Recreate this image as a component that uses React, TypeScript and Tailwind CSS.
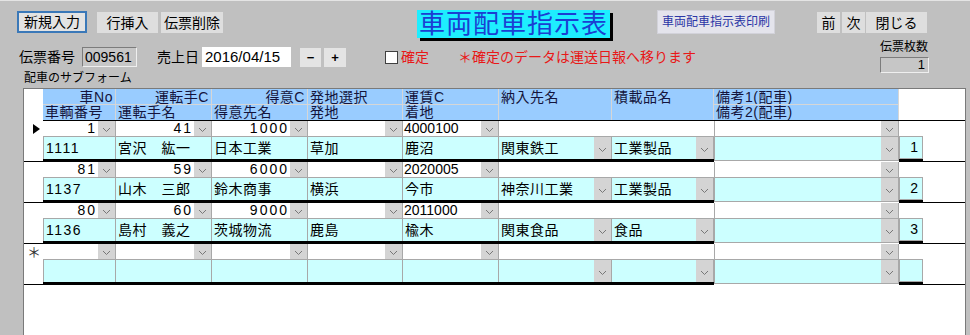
import React from 'react';

type Rec = {
  no: string;
  drvC: string;
  tokC: string;
  unC: string;
  car: string;
  drv: string;
  tok: string;
  hatsu: string;
  chaku: string;
  nonyu: string;
  hin: string;
  n: string;
};

const records: Rec[] = [
  { no: '1', drvC: '41', tokC: '1000', unC: '4000100', car: '1111', drv: '宮沢　紘一', tok: '日本工業', hatsu: '草加', chaku: '鹿沼', nonyu: '関東鉄工', hin: '工業製品', n: '1' },
  { no: '81', drvC: '59', tokC: '6000', unC: '2020005', car: '1137', drv: '山木　三郎', tok: '鈴木商事', hatsu: '横浜', chaku: '今市', nonyu: '神奈川工業', hin: '工業製品', n: '2' },
  { no: '80', drvC: '60', tokC: '9000', unC: '2011000', car: '1136', drv: '島村　義之', tok: '茨城物流', hatsu: '鹿島', chaku: '楡木', nonyu: '関東食品', hin: '食品', n: '3' },
];

const empty: Rec = { no: '', drvC: '', tokC: '', unC: '', car: '', drv: '', tok: '', hatsu: '', chaku: '', nonyu: '', hin: '', n: '' };

function Chev() {
  return (
    <svg width="9" height="6" viewBox="0 0 9 6">
      <path d="M1 1L4.5 4.5L8 1" fill="none" stroke="#777" strokeWidth="1" />
    </svg>
  );
}

function Btn({ tall }: { tall?: boolean }) {
  return (
    <div className={tall ? 'w-[17px] h-full bg-[#d4d4d4] flex items-center justify-center pt-[3px] shrink-0' : 'w-[17px] h-full bg-[#d4d4d4] flex items-center justify-center pt-[2px] shrink-0'}>
      <Chev />
    </div>
  );
}

// upper white line: combo with value and drop button
function L1({ v, left }: { v: string; left?: boolean }) {
  return (
    <div className="flex h-[15px] bg-white border-r border-[#a8a8a8]">
      <div className={left ? 'flex-1 overflow-hidden pl-[1px] text-[14px] leading-[15px]' : 'flex-1 overflow-hidden text-right pr-[1px] text-[14px] leading-[15px] tracking-[2px]'}>
        {v}
      </div>
      <Btn />
    </div>
  );
}

function L2({ v, first, combo, num }: { v: string; first?: boolean; combo?: boolean; num?: boolean }) {
  return (
    <div className={first ? 'flex h-[23px] bg-[#ccffff] border-t border-r border-l border-[#a8a8a8]' : 'flex h-[23px] bg-[#ccffff] border-t border-r border-[#a8a8a8]'}>
      <div className={num ? 'flex-1 overflow-hidden whitespace-nowrap pl-[2px] pt-[1px] text-[14px] leading-[20px] tracking-[1.5px]' : 'flex-1 overflow-hidden whitespace-nowrap pl-[2px] pt-[1px] text-[14px] leading-[20px] tracking-[0.5px]'}>
        {v}
      </div>
      {combo && <Btn tall />}
    </div>
  );
}

function Bar() {
  return <div className="h-[3px] bg-black" />;
}

function Record({ r, marker }: { r: Rec; marker?: 'cur' | 'new' }) {
  return (
    <div className="flex h-[41px]">
      <div className="w-[19px] h-full border-b border-black">
        {marker === 'cur' && (
          <div className="pl-[9px] pt-[3px]">
            <svg width="7" height="10" viewBox="0 0 7 10">
              <path d="M0 0L7 5L0 10Z" fill="#000" />
            </svg>
          </div>
        )}
        {marker === 'new' && <div className="pl-[3px] text-[14px] leading-[16px] text-[#333]">＊</div>}
      </div>
      <div className="w-[73px] flex flex-col">
        <L1 v={r.no} />
        <L2 v={r.car} first num />
        <Bar />
      </div>
      <div className="w-[96px] flex flex-col">
        <L1 v={r.drvC} />
        <L2 v={r.drv} />
        <Bar />
      </div>
      <div className="w-[96px] flex flex-col">
        <L1 v={r.tokC} />
        <L2 v={r.tok} />
        <Bar />
      </div>
      <div className="w-[95px] flex flex-col">
        <L1 v="" />
        <L2 v={r.hatsu} />
        <Bar />
      </div>
      <div className="w-[96px] flex flex-col">
        <L1 v={r.unC} left />
        <L2 v={r.chaku} />
        <Bar />
      </div>
      <div className="w-[113px] flex flex-col">
        <div className="h-[15px] bg-white" />
        <L2 v={r.nonyu} combo />
        <Bar />
      </div>
      <div className="w-[102px] flex flex-col">
        <div className="h-[15px] bg-white" />
        <L2 v={r.hin} combo />
        <Bar />
      </div>
      <div className="w-[185px] flex flex-col">
        <div className="flex h-[15px] bg-white border-l border-r border-[#a8a8a8]">
          <div className="flex-1" />
          <Btn />
        </div>
        <div className="flex h-[25px] bg-[#ccffff] border border-[#a8a8a8]">
          <div className="flex-1" />
          <Btn tall />
        </div>
        <div className="h-[1px] bg-white" />
      </div>
      <div className="w-[24px] flex flex-col">
        <div className="h-[15px] bg-white" />
        <div className="h-[23px] bg-[#ccffff] border border-[#a8a8a8] text-right pr-[4px] text-[14px] leading-[20px]">{r.n}</div>
        <Bar />
      </div>
      <div className="flex-1 h-full border-b border-black" />
    </div>
  );
}

function HCell({ t, right, tall, last }: { t: string; right?: boolean; tall?: boolean; last?: boolean }) {
  const base = 'bg-[#99ccff] overflow-hidden whitespace-nowrap text-[14px] tracking-[0.5px] text-[#14143c] border-r border-[#d6d6d6] px-[2px]';
  return (
    <div
      className={
        base +
        (tall ? ' h-[31px] leading-[17px]' : last ? ' h-[15px] leading-[15px]' : ' h-[16px] leading-[16px] border-b') +
        (right ? ' text-right' : '')
      }
    >
      {t}
    </div>
  );
}

export default function App() {
  return (
    <div className="w-[970px] h-[335px] overflow-hidden bg-[#c0c0c0] border-t border-[#e4e4e4] flex flex-col text-black font-['Liberation_Sans','Noto_Sans_CJK_JP',sans-serif]">
      {/* top buttons */}
      <div className="h-[37px] flex items-start pt-[9px] pl-[17px] shrink-0">
        <button className="mt-[1px] w-[70px] h-[22px] border-2 border-[#3a78b8] bg-[#e3e3e3] text-[14px] leading-none">新規入力</button>
        <button className="mt-[2px] ml-[10px] w-[61px] h-[21px] bg-[#dedede] text-[14px] leading-none">行挿入</button>
        <button className="mt-[2px] ml-[3px] w-[62px] h-[21px] bg-[#dedede] text-[14px] leading-none">伝票削除</button>
        <div className="ml-[194px] w-[193px] h-[28px] bg-[#1eeeff] shadow-[3px_3px_0_0_#000] flex items-center justify-center text-[26px] leading-none tracking-[1px] text-[#1b3fd2]">
          車両配車指示表
        </div>
        <button className="ml-[47px] w-[118px] h-[24px] bg-[#e4e4ec] border border-[#d2d2da] text-[12px] leading-none text-[#2a36a6]">車両配車指示表印刷</button>
        <button className="mt-[2px] ml-[42px] w-[23px] h-[21px] bg-[#dedede] text-[14px] leading-none">前</button>
        <button className="mt-[2px] ml-[2px] w-[23px] h-[21px] bg-[#dedede] text-[14px] leading-none">次</button>
        <button className="mt-[2px] ml-[1px] w-[61px] h-[21px] bg-[#dedede] text-[14px] leading-none">閉じる</button>
      </div>

      {/* header fields */}
      <div className="h-[50px] flex shrink-0">
        <div className="flex-1 flex flex-col pt-[9px]">
          <div className="flex items-center h-[20px] pl-[19px] text-[14px]">
            <div className="w-[63px] leading-[20px]">伝票番号</div>
            <div className="w-[55px] h-[20px] bg-[#c6c6c6] border-t border-l border-[#7c7c7c] border-b border-r border-b-[#efefef] border-r-[#efefef] pl-[2px] text-[14px] leading-[18px]">009561</div>
            <div className="ml-[20px] w-[45px] leading-[20px]">売上日</div>
            <div className="w-[89px] h-[20px] bg-white pl-[3px] text-[15px] leading-[20px]">2016/04/15</div>
            <button className="ml-[9px] w-[21px] h-[19px] bg-[#e4e4e4] text-[13px] font-bold leading-none">−</button>
            <button className="ml-[3px] w-[22px] h-[19px] bg-[#e4e4e4] text-[13px] font-bold leading-none">+</button>
            <div className="ml-[39px] w-[13px] h-[13px] bg-white border border-[#404040]" />
            <div className="ml-[3px] text-[#e81818] leading-[20px]">確定</div>
            <div className="ml-[29px] text-[#e81818] leading-[20px]">＊確定のデータは運送日報へ移ります</div>
          </div>
          <div className="mt-[4px] pl-[24px] text-[12px] leading-[14px]">配車のサブフォーム</div>
        </div>
        <div className="w-[49px] mr-[41px] pt-[2px] flex flex-col">
          <div className="text-[12px] leading-[14px]">伝票枚数</div>
          <div className="mt-[3px] h-[16px] bg-[#c6c6c6] border-t border-l border-[#7c7c7c] border-b border-r border-b-[#efefef] border-r-[#efefef] text-right pr-[3px] text-[13px] leading-[14px]">1</div>
        </div>
      </div>

      {/* subform */}
      <div className="ml-[23px] w-[943px] flex-1 bg-white border-t border-l border-r border-[#7a7a7a] flex flex-col">
        <div className="flex h-[32px]">
          <div className="w-[19px] bg-white" />
          <div className="flex-1 flex border-b border-black">
            <div className="w-[73px]">
              <HCell t="車No" right />
              <HCell t="車輌番号" last />
            </div>
            <div className="w-[96px]">
              <HCell t="運転手C" right />
              <HCell t="運転手名" last />
            </div>
            <div className="w-[96px]">
              <HCell t="得意C" right />
              <HCell t="得意先名" last />
            </div>
            <div className="w-[95px]">
              <HCell t="発地選択" />
              <HCell t="発地" last />
            </div>
            <div className="w-[96px]">
              <HCell t="運賃C" />
              <HCell t="着地" last />
            </div>
            <div className="w-[113px]">
              <HCell t="納入先名" tall />
            </div>
            <div className="w-[102px]">
              <HCell t="積載品名" tall />
            </div>
            <div className="w-[185px]">
              <HCell t="備考1(配車)" />
              <HCell t="備考2(配車)" last />
            </div>
            <div className="flex-1 bg-white" />
          </div>
        </div>
        {records.map((r, i) => (
          <Record key={i} r={r} marker={i === 0 ? 'cur' : undefined} />
        ))}
        <Record r={empty} marker="new" />
      </div>
    </div>
  );
}
